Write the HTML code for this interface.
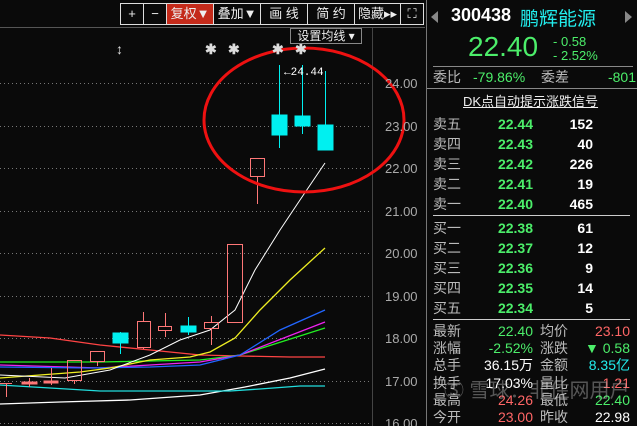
<!DOCTYPE html>
<html><head><meta charset="utf-8"><style>
*{margin:0;padding:0;box-sizing:border-box}
body{width:637px;height:426px;background:#0a0a0a;overflow:hidden;position:relative;font-family:"Liberation Sans","Noto Sans CJK SC",sans-serif;color:#ddd}
.a{position:absolute;white-space:nowrap}
.tb{position:absolute;top:3px;height:22px;border:1px solid #ddd;color:#eee;font-size:13px;line-height:20px;text-align:center}
.lab{color:#bbb;font-size:14px}
.g{color:#4cee6a}
.r{color:#ff6666}
.w{color:#fff}
.c{color:#22eeee}
.row{position:absolute;left:433px;font-size:14px;height:18px;line-height:18px}
</style></head><body>
<svg class="a" style="left:0;top:0" width="637" height="426">
<line x1="0" y1="27.5" x2="425" y2="27.5" stroke="#555"/>
<line x1="372.5" y1="28" x2="372.5" y2="426" stroke="#444"/>
<line x1="426.5" y1="0" x2="426.5" y2="426" stroke="#777"/>
<g stroke="#777" stroke-dasharray="1,3">
<line x1="0" y1="83.5" x2="370" y2="83.5"/><line x1="0" y1="126.5" x2="370" y2="126.5"/>
<line x1="0" y1="168.5" x2="370" y2="168.5"/><line x1="0" y1="211.5" x2="370" y2="211.5"/>
<line x1="0" y1="253.5" x2="370" y2="253.5"/><line x1="0" y1="296.5" x2="370" y2="296.5"/>
<line x1="0" y1="338.5" x2="370" y2="338.5"/><line x1="0" y1="381.5" x2="370" y2="381.5"/>
<line x1="0" y1="423.5" x2="370" y2="423.5"/>
</g>
<g fill="none" stroke-width="1.3">
<polyline stroke="#ff4444" points="0,335 50,338 100,345 150,350 200,355 240,356 290,357 325,357"/>
<polyline stroke="#fff" points="0,404 60,402 130,400 200,395 245,387 290,378 325,369"/>
<polyline stroke="#22dddd" points="0,385 50,388 100,391 160,391 230,391 260,389 300,386 325,386"/>
<polyline stroke="#22ee22" points="0,362 100,362 200,360 240,355 325,328"/>
<polyline stroke="#ee22ee" points="0,365 100,368 200,362 240,355 325,322"/>
<polyline stroke="#2266ff" points="0,367 90,368 150,367 200,365 240,355 280,330 325,310"/>
<polyline stroke="#eeee22" points="0,378 80,372 110,368 150,360 190,357 210,352 235,338 260,310 290,280 325,248"/>
<polyline stroke="#fff" stroke-width="1" points="0,375 65,378 110,370 150,355 180,340 210,330 235,310 255,270 280,230 300,200 325,163"/>
</g>
<g stroke="#ff7777" fill="none">
<line x1="6.5" y1="383" x2="6.5" y2="397"/><line x1="0" y1="383.5" x2="12" y2="383.5"/>
<line x1="29.5" y1="378" x2="29.5" y2="387"/><rect x="22" y="382" width="15" height="2" fill="#ff7777"/>
<line x1="51.5" y1="368" x2="51.5" y2="385"/><rect x="44" y="381" width="14" height="2" fill="#ff7777"/>
<rect x="67.5" y="360.5" width="14" height="20"/><line x1="74.5" y1="380" x2="74.5" y2="384"/>
<rect x="90.5" y="351.5" width="14" height="10"/><line x1="97.5" y1="361" x2="97.5" y2="366"/>
<rect x="137.5" y="321.5" width="13" height="26"/><line x1="143.5" y1="312" x2="143.5" y2="321"/><line x1="143.5" y1="347" x2="143.5" y2="349"/>
<rect x="158.5" y="326.5" width="13" height="4"/><line x1="165.5" y1="313" x2="165.5" y2="326"/><line x1="165.5" y1="330" x2="165.5" y2="337"/>
<rect x="204.5" y="322.5" width="14" height="6"/><line x1="211.5" y1="316" x2="211.5" y2="322"/><line x1="211.5" y1="328" x2="211.5" y2="345"/>
<rect x="227.5" y="244.5" width="15" height="78"/>
<rect x="250.5" y="158.5" width="14" height="18"/><line x1="257.5" y1="176" x2="257.5" y2="204"/>
</g>
<g fill="#00f0f0" stroke="#00f0f0">
<rect x="113" y="333" width="15" height="10"/><line x1="120.5" y1="332" x2="120.5" y2="354"/>
<rect x="181" y="326" width="15" height="6"/><line x1="188.5" y1="317" x2="188.5" y2="335"/>
<rect x="272" y="115" width="15" height="20"/><line x1="279.5" y1="65" x2="279.5" y2="148"/>
<rect x="295" y="116" width="15" height="10"/><line x1="302.5" y1="65" x2="302.5" y2="134"/>
<rect x="318" y="125" width="15" height="25"/><line x1="325.5" y1="71" x2="325.5" y2="150"/>
</g>
<ellipse cx="304" cy="120" rx="100" ry="72" fill="none" stroke="#ee1111" stroke-width="3"/>
<text x="284" y="75" fill="#fff" font-family="Liberation Mono" font-size="11">←24.44</text>
<g fill="#aaa" font-size="13" font-family="Liberation Sans">
<text x="385" y="88">24.00</text><text x="385" y="131">23.00</text><text x="385" y="173">22.00</text>
<text x="385" y="216">21.00</text><text x="385" y="258">20.00</text><text x="385" y="301">19.00</text>
<text x="385" y="343">18.00</text><text x="385" y="386">17.00</text><text x="385" y="428">16.00</text>
</g>
<g fill="#ddd" font-size="14" font-weight="bold"><text x="116" y="54">↕</text><text x="205" y="54">✱</text><text x="228" y="54">✱</text><text x="272" y="54">✱</text><text x="295" y="54">✱</text></g>
<line x1="433" y1="66.5" x2="633" y2="66.5" stroke="#888"/>
<line x1="427" y1="88.5" x2="637" y2="88.5" stroke="#888"/>
<line x1="433" y1="215.5" x2="630" y2="215.5" stroke="#ccc"/>
<line x1="433" y1="319.5" x2="630" y2="319.5" stroke="#ccc"/>
<polygon points="438,11 431,17 438,23" fill="#888"/><polygon points="625,11 632,17 625,23" fill="#888"/>
</svg>
<div class="tb" style="left:120px;width:24px">+</div>
<div class="tb" style="left:143px;width:24px">−</div>
<div class="tb" style="left:166px;width:48px;background:#c42a1a">复权▼</div>
<div class="tb" style="left:213px;width:48px">叠加▼</div>
<div class="tb" style="left:260px;width:48px">画 线</div>
<div class="tb" style="left:307px;width:48px">简 约</div>
<div class="tb" style="left:354px;width:47px">隐藏▸▸</div>
<div class="tb" style="left:400px;width:24px">⛶</div>
<div class="a" style="left:290px;top:28px;width:72px;height:16px;border:1px solid #888;font-size:12px;line-height:14px;color:#eee;text-align:center">设置均线 ▾</div>
<div class="a w" style="left:451px;top:5px;font-size:18px;font-weight:bold">300438</div>
<div class="a c" style="left:520px;top:4px;font-size:19px">鹏辉能源</div>
<div class="a g" style="left:468px;top:31px;font-size:28px">22.40</div>
<div class="a g" style="left:553px;top:35px;font-size:13px;line-height:14px">- 0.58<br>- 2.52%</div>
<div class="row" style="top:68px;width:200px"><span class="lab">委比</span><span class="a g" style="left:40px">-79.86%</span><span class="a lab" style="left:108px">委差</span><span class="a g" style="right:-3px">-801</span></div>
<div class="a" style="left:463px;top:91px;font-size:13px;color:#eee;text-decoration:underline">DK点自动提示涨跌信号</div>
<div id="ob"></div>
<div class="a" style="left:444px;top:374px;font-size:20px;color:rgba(200,200,200,.4)">Ⓢ 雪球：非住网用户</div>
<script>
var s='',rows=[['卖五','22.44','152',115],['卖四','22.43','40',135],['卖三','22.42','226',155],['卖二','22.41','19',175],['卖一','22.40','465',195],['买一','22.38','61',219],['买二','22.37','12',239],['买三','22.36','9',259],['买四','22.35','14',279],['买五','22.34','5',299]];
rows.forEach(function(r){s+='<div class="row" style="top:'+r[3]+'px;width:200px"><span class="lab">'+r[0]+'</span><span class="a g" style="right:100px;font-weight:bold">'+r[1]+'</span><span class="a w" style="right:40px;font-weight:bold">'+r[2]+'</span></div>';});
var b=[['最新','22.40','g','均价','23.10','r',322],['涨幅','-2.52%','g','涨跌','▼ 0.58','g',339],['总手','36.15万','w','金额','8.35亿','c',356],['换手','17.03%','w','量比','1.21','r',374],['最高','24.26','r','最低','22.40','g',391],['今开','23.00','r','昨收','22.98','w',408]];
b.forEach(function(r){s+='<div class="row" style="top:'+r[6]+'px;width:197px"><span class="lab">'+r[0]+'</span><span class="a '+r[2]+'" style="right:97px">'+r[1]+'</span><span class="a lab" style="left:107px">'+r[3]+'</span><span class="a '+r[5]+'" style="right:0">'+r[4]+'</span></div>';});
document.getElementById('ob').innerHTML=s;
</script>
</body></html>
